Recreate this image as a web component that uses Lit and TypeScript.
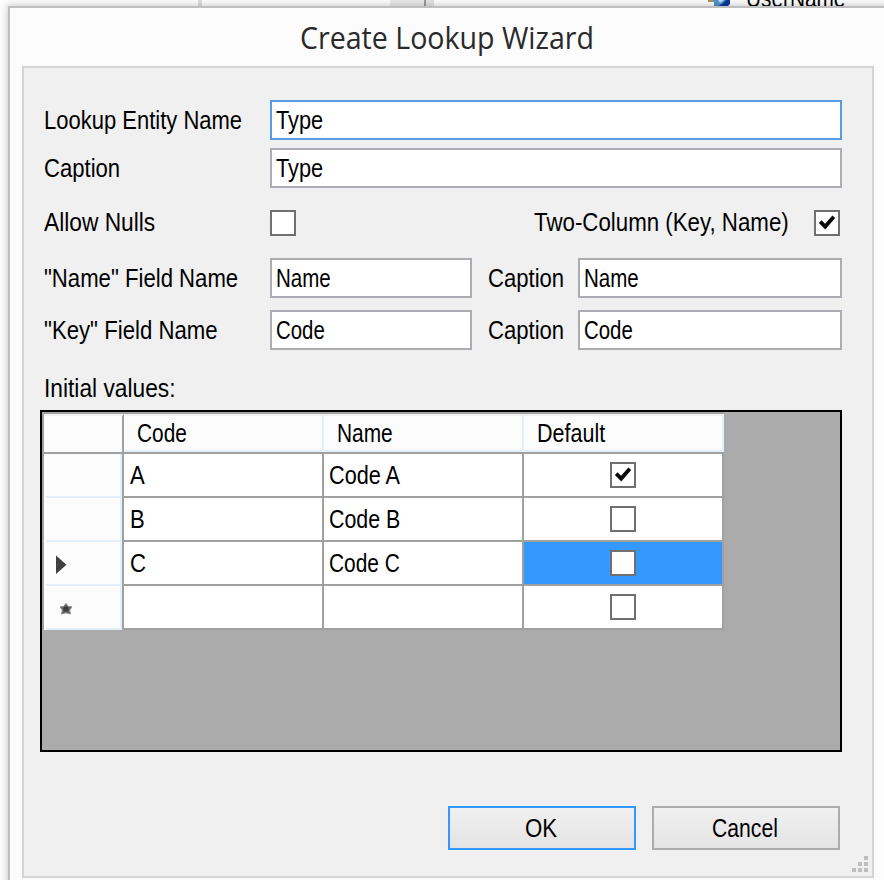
import { LitElement, html, css, nothing } from "lit";
import { customElement, property, query } from "lit/decorators.js";

/** One line of text condensed to a given advance width. */
@customElement("fit-text")
class FitText extends LitElement {
  static styles = css`
    :host { display: inline-block; white-space: nowrap; }
    .line { display: inline-block; transform-origin: 0 50%; }
  `;
  @property() text = "";
  @property({ type: Number }) w = 0;
  @query(".line") line!: HTMLElement;

  updated() {
    this.style.width = `${this.w}px`;
    const natural = this.line.offsetWidth;
    if (natural) this.line.style.transform = `scaleX(${this.w / natural})`;
  }
  render() {
    return html`<span class="line">${this.text}</span>`;
  }
}

@customElement("check-box")
class CheckBox extends LitElement {
  static styles = css`
    :host { display: block; box-sizing: border-box; width: 26px; height: 26px; border: 2px solid #707070; background: #fff; flex: none; }
    svg { display: block; }
  `;
  @property({ type: Boolean }) checked = false;
  render() {
    return this.checked
      ? html`<svg width="22" height="22" viewBox="0 0 22 22"><path d="M4.2 9.6 L9.2 14.6 L17.8 4.8" fill="none" stroke="#0a0a0a" stroke-width="3.8"/></svg>`
      : nothing;
  }
}

const t = (text: string, w: number) => html`<fit-text .text=${text} .w=${w}></fit-text>`;

const rows = [
  { mark: "", code: "A", cw: 15, name: "Code A", nw: 71, on: true, sel: false },
  { mark: "", code: "B", cw: 15, name: "Code B", nw: 71, on: false, sel: false },
  { mark: "current", code: "C", cw: 16, name: "Code C", nw: 71, on: false, sel: true },
  { mark: "new", code: "", cw: 0, name: "", nw: 0, on: false, sel: false },
];

@customElement("app-root")
class AppRoot extends LitElement {
  static styles = css`
    :host { display: block; width: 884px; height: 880px; overflow: hidden; background: #fdfdfd; font: 25px "Liberation Sans", Arial, sans-serif; color: #000; }
    * { box-sizing: border-box; }
    .behind { height: 6px; display: flex; overflow: hidden; }
    .gap1 { width: 198px; }
    .rule { width: 4px; background: #dedede; }
    .gap2 { width: 188px; }
    .bar { width: 34px; background: #e9e9e9; }
    .split { width: 2px; background: #9b9b9b; }
    .bar2 { width: 8px; background: #e3e3e3; }
    .node { margin-left: 274px; width: 38px; display: block; flex: none; }
    .tree { line-height: 28px; margin-top: -16px; height: 28px; }
    .dialog { position: relative; margin-left: 8px; width: 890px; height: 880px; border: 2px solid #bfbfbf; background: #fcfcfc; box-shadow: 0 0 7px 1px rgba(0,0,0,.2); }
    .title { height: 58px; padding: 8px 0 0 290px; font: 31px/42px "Open Sans", "Noto Sans", sans-serif; color: #2a2a2a; }
    .client { position: relative; margin-left: 12px; width: 852px; height: 812px; border: 2px solid #d5d5d5; background: #f0f0f0; padding: 32px 30px 0 16px; }
    .row { display: flex; align-items: center; height: 40px; }
    .label { width: 230px; padding-left: 4px; flex: none; }
    .input { height: 40px; border: 2px solid #abadb3; background: #fff; display: flex; align-items: center; padding-left: 4px; flex: none; }
    .wide { width: 572px; }
    .focus { border-color: #569de5; }
    .first { width: 202px; }
    .second { width: 264px; }
    .mid { width: 106px; padding-left: 16px; }
    .mt8 { margin-top: 8px; }
    .mt12 { margin-top: 12px; }
    .checks { margin-top: 22px; height: 26px; }
    .checks .label, .checks .two { margin-top: -2px; }
    .two { margin-left: 238px; width: 280px; }
    .fields { margin-top: 22px; }
    .initial { margin-top: 24px; height: 36px; padding: 0 0 0 4px; line-height: 28px; }
    .grid { width: 802px; height: 342px; border: 2px solid #000; background: #ababab; }
    .table { width: 682px; padding: 2px 0 0 2px; background: linear-gradient(#a0a0a0, #a0a0a0) 0 0 / 100% 2px no-repeat, linear-gradient(#a0a0a0, #a0a0a0) 0 0 / 2px 100% no-repeat; display: grid; grid-template-columns: 80px 200px 200px 200px; grid-template-rows: 40px repeat(4, 44px); }
    .corner { background: #fcfcfc; border-right: 2px solid #a0a0a0; border-bottom: 2px solid #a0a0a0; border-top: 2px solid #f0f0f0; }
    .hwrap { border-bottom: 2px solid #a0a0a0; }
    .head { height: 38px; background: #fcfcfc; border-top: 2px solid #f0f0f0; border-right: 2px solid #e5effb; border-bottom: 2px solid #e5effb; padding: 1px 0 0 13px; display: flex; align-items: center; }
    .rh { border-right: 2px solid #a0a0a0; background: #fff; padding-left: 2px; }
    .rhin { height: 44px; background: #fcfcfc; border-right: 2px solid #e5effb; border-bottom: 2px solid #e5effb; }
    .rhin svg { display: block; }
    .cell { background: #fff; border-right: 2px solid #a0a0a0; border-bottom: 2px solid #a0a0a0; display: flex; align-items: center; padding-left: 5px; }
    .code { padding-left: 6px; }
    .box { padding: 0 0 0 86px; }
    .sel { background: #3399ff; }
    .buttons { display: flex; gap: 16px; margin: 54px 0 0 408px; }
    .btn { width: 188px; height: 44px; border: 2px solid #acacac; background: linear-gradient(#f0f0f0, #e4e4e4); display: flex; justify-content: center; align-items: center; padding-right: 3px; }
    .default { border-color: #3399ff; }
    .grip { position: absolute; right: 4px; bottom: 4px; }
  `;

  rowHeader(mark: string) {
    if (mark === "current")
      return html`<svg width="74" height="42"><path d="M10 13.5 V32 L20.5 22.8 Z" fill="#404040"/></svg>`;
    if (mark === "new")
      return html`<svg width="74" height="42"><path d="M20 17.5 L22.2 20.4 L26 21 L23.6 24 L24.4 28 L20 26.8 L15.6 28 L16.4 24 L14 21 L17.8 20.4 Z" fill="#606060" stroke="#8a8a8a" stroke-width="1"/><circle cx="20" cy="23" r="2.6" fill="#3c3c3c"/></svg>`;
    return nothing;
  }

  render() {
    return html`
      <div class="behind">
        <div class="gap1"></div><div class="rule"></div><div class="gap2"></div>
        <div class="bar"></div><div class="split"></div><div class="bar2"></div>
        <svg class="node" width="38" height="6"><path d="M0 0 H6 V2 H0Z" fill="#a39261"/><path d="M6 0 H22 V4 L20 6 H6Z" fill="#0b3a9c"/><path d="M6 0 H18 L14 4 L10 6 H6Z" fill="#4f93cf"/><path d="M10 0 H16 L12 3Z" fill="#b8dcfa"/></svg>
        <div class="tree">${t("UserName", 99)}</div>
      </div>
      <div class="dialog">
        <div class="title">${t("Create Lookup Wizard", 294)}</div>
        <div class="client">
          <div class="row"><div class="label">${t("Lookup Entity Name", 198)}</div><div class="input wide focus">${t("Type", 47)}</div></div>
          <div class="row mt8"><div class="label">${t("Caption", 76)}</div><div class="input wide">${t("Type", 47)}</div></div>
          <div class="row checks"><div class="label">${t("Allow Nulls", 111)}</div><check-box></check-box><div class="two">${t("Two-Column (Key, Name)", 255)}</div><check-box checked></check-box></div>
          <div class="row fields"><div class="label">${t('"Name" Field Name', 194)}</div><div class="input first">${t("Name", 55)}</div><div class="mid">${t("Caption", 76)}</div><div class="input second">${t("Name", 55)}</div></div>
          <div class="row mt12"><div class="label">${t('"Key" Field Name', 174)}</div><div class="input first">${t("Code", 49)}</div><div class="mid">${t("Caption", 76)}</div><div class="input second">${t("Code", 49)}</div></div>
          <div class="initial">${t("Initial values:", 132)}</div>
          <div class="grid">
            <div class="table">
              <div class="corner"></div>
              <div class="hwrap"><div class="head">${t("Code", 50)}</div></div>
              <div class="hwrap"><div class="head">${t("Name", 56)}</div></div>
              <div class="hwrap"><div class="head">${t("Default", 68)}</div></div>
              ${rows.map((r) => html`
                <div class="rh"><div class="rhin">${this.rowHeader(r.mark)}</div></div>
                <div class="cell code">${r.code ? t(r.code, r.cw) : nothing}</div>
                <div class="cell">${r.name ? t(r.name, r.nw) : nothing}</div>
                <div class="cell box ${r.sel ? "sel" : ""}"><check-box ?checked=${r.on}></check-box></div>`)}
            </div>
          </div>
          <div class="buttons"><div class="btn default">${t("OK", 32)}</div><div class="btn">${t("Cancel", 66)}</div></div>
          <svg class="grip" width="16" height="16" fill="#bfbfbf"><path d="M12 0h4v4h-4zM6 6h4v4h-4zM12 6h4v4h-4zM0 12h4v4h-4zM6 12h4v4h-4zM12 12h4v4h-4z"/></svg>
        </div>
      </div>`;
  }
}
